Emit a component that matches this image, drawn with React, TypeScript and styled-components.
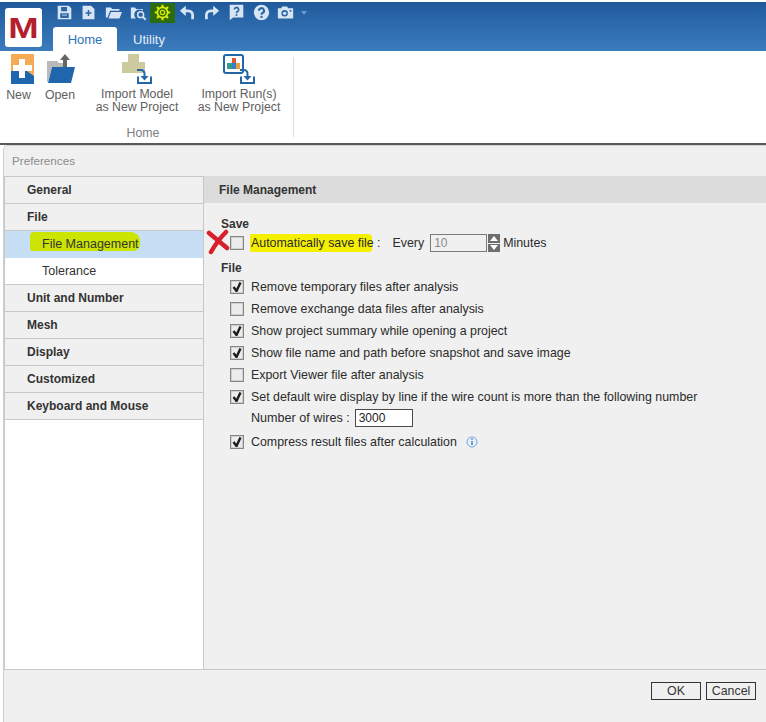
import React from 'react';
import styled, { createGlobalStyle } from 'styled-components';

const GlobalStyle = createGlobalStyle`
  html, body { margin: 0; padding: 0; background: #fff; }
  body { font-family: "Liberation Sans", Arial, sans-serif; font-size: 12.4px; color: #2b2b2b; }
`;

const Page = styled.div`
  width: 766px;
  height: 722px;
  overflow: hidden;
  display: flex;
  flex-direction: column;
`;

/* ---------- title bar ---------- */
const TopBar = styled.header`
  height: 49px;
  margin-top: 2px;
  background: linear-gradient(#1f5a9c, #3b7cbd);
  display: flex;
  padding-left: 5px;
  flex: none;
`;
const Logo = styled.div`
  width: 37px;
  height: 39px;
  margin-top: 6px;
  background: #fff;
  border-radius: 3px;
  display: flex;
  align-items: center;
  justify-content: center;
  color: #b3202c;
  font-size: 32px;
  font-weight: 700;
  line-height: 1;
`;
const LogoLetter = styled.span`
  display: inline-block;
  transform: scale(1.14, 0.95);
`;
const TopColumn = styled.div`
  margin-left: 11px;
  display: flex;
  flex-direction: column;
`;
const QuickBar = styled.div`
  height: 25px;
  display: flex;
  align-items: center;
  margin: -2px 0 0 -1px;
`;
const QuickIcon = styled.div<{ $active?: boolean; $w?: number }>`
  width: ${({ $w }) => $w ?? 24.6}px;
  height: 20px;
  flex: none;
  display: flex;
  align-items: center;
  justify-content: center;
  background: ${({ $active }) => ($active ? '#2c6b10' : 'transparent')};
`;
const Tabs = styled.div`
  display: flex;
  height: 24px;
  margin-top: 2px;
`;
const Tab = styled.div<{ $active?: boolean }>`
  width: 64px;
  display: flex;
  align-items: center;
  justify-content: center;
  font-size: 13px;
  border-radius: 3px 3px 0 0;
  background: ${({ $active }) => ($active ? '#fff' : 'transparent')};
  color: ${({ $active }) => ($active ? '#2f72b5' : '#e4eef8')};
`;

/* ---------- ribbon ---------- */
const Ribbon = styled.section`
  height: 92px;
  flex: none;
  background: #fff;
  display: flex;
`;
const RibbonGroup = styled.div`
  width: 293px;
  border-right: 1px solid #dcdcdc;
  margin: 6px 0 6px;
  display: flex;
  flex-direction: column;
`;
const RibbonButtons = styled.div`
  display: flex;
  flex: none;
  height: 71px;
  margin-top: -3px;
`;
const RibbonButton = styled.div<{ $w: number }>`
  width: ${({ $w }) => $w}px;
  flex: none;
  display: flex;
  flex-direction: column;
  align-items: center;
  color: #606060;
  font-size: 12.3px;
  line-height: 13px;
  text-align: center;
  white-space: nowrap;
`;
const RibbonIcon = styled.div<{ $h: number; $shift?: number }>`
  height: ${({ $h }) => $h}px;
  margin-left: ${({ $shift }) => $shift ?? 0}px;
  display: flex;
`;
const GroupLabel = styled.div`
  flex: none;
  margin-top: 1px;
  padding-right: 7px;
  text-align: center;
  color: #7d7d7d;
  font-size: 12.3px;
  line-height: 14px;
`;

/* ---------- dialog ---------- */
const Dialog = styled.section`
  flex: 1;
  min-height: 0;
  border-top: 2px solid #5a5a5a;
  background: #fff;
  display: flex;
  flex-direction: column;
`;
const DialogInner = styled.div`
  flex: 1;
  min-height: 0;
  margin-left: 3px;
  border-left: 1px solid #cfcfcf;
  border-top: 1px solid #cfcfcf;
  border-top-left-radius: 5px;
  background: #f0f0f0;
  display: flex;
  flex-direction: column;
`;
const DialogTitle = styled.div`
  height: 30px;
  box-sizing: border-box;
  flex: none;
  padding: 0 0 2px 8px;
  display: flex;
  align-items: center;
  color: #8c8c8c;
  font-size: 11.7px;
`;
const DialogBody = styled.div`
  height: 493px;
  flex: none;
  display: flex;
`;
const Sidebar = styled.nav`
  width: 200px;
  box-sizing: border-box;
  flex: none;
  background: #fff;
  border-top: 1px solid #c8c8c8;
  border-left: 1px solid #c8c8c8;
  border-right: 1px solid #c8c8c8;
`;
const Category = styled.div`
  height: 26px;
  padding-left: 22px;
  display: flex;
  align-items: center;
  background: #f0f0f0;
  border-bottom: 1px solid #c8c8c8;
  font-size: 12px;
  font-weight: 700;
  color: #333;
`;
const SubItem = styled.div<{ $selected?: boolean; $last?: boolean }>`
  height: ${({ $selected }) => ($selected ? 27 : 26)}px;
  box-sizing: border-box;
  padding: ${({ $selected }) => ($selected ? '0 0 1px 37px' : '0 0 0 37px')};
  display: flex;
  align-items: center;
  position: relative;
  font-size: 12.5px;
  background: ${({ $selected }) => ($selected ? '#c6dff5' : '#fff')};
  color: #333;
  ${({ $last }) => ($last ? 'height: 27px; border-bottom: 1px solid #c8c8c8;' : '')}
`;
const Marker = styled.span`
  position: absolute;
  left: 25px;
  top: 1px;
  width: 110px;
  height: 19px;
  background: #cbe400;
  border-radius: 4px 9px 7px 3px;
`;
const SubItemText = styled.span`
  position: relative;
`;

const Content = styled.main`
  flex: 1;
  min-width: 0;
  display: flex;
  flex-direction: column;
`;
const ContentHeader = styled.div`
  height: 27px;
  flex: none;
  padding-left: 15px;
  display: flex;
  align-items: center;
  background: #dcdcdc;
  font-size: 12px;
  font-weight: 700;
  color: #333;
`;
const ContentBody = styled.div`
  padding: 14px 0 0 17px;
  display: flex;
  flex-direction: column;
`;
const SectionLabel = styled.div<{ $top?: number }>`
  height: 15px;
  margin-top: ${({ $top }) => $top ?? 0}px;
  line-height: 14px;
  font-size: 12px;
  font-weight: 700;
  color: #333;
`;
const Row = styled.div<{ $indent?: number; $h?: number }>`
  height: ${({ $h }) => $h ?? 22}px;
  display: flex;
  align-items: center;
  padding-left: ${({ $indent }) => $indent ?? 9}px;
  position: relative;
  white-space: nowrap;
`;
const Box = styled.span`
  width: 14px;
  height: 14px;
  box-sizing: border-box;
  flex: none;
  margin-right: 7px;
  border: 1px solid #858585;
  background: #ececec;
  box-shadow: inset 0 0 0 1px #d0d0d0;
  display: flex;
  align-items: center;
  justify-content: center;
`;
const HighlightedLabel = styled.span`
  position: relative;
`;
const YellowMark = styled.span`
  position: absolute;
  left: -1px;
  top: -2px;
  width: 122px;
  height: 18px;
  background: #f5ef00;
  border-radius: 2px 4px 3px 2px;
`;
const HighlightedText = styled.span`
  position: relative;
`;
const Every = styled.span`
  margin-left: 12px;
`;
const Field = styled.span<{ $w: number; $disabled?: boolean }>`
  width: ${({ $w }) => $w}px;
  height: 18px;
  box-sizing: border-box;
  display: flex;
  align-items: center;
  padding-left: 3px;
  font-size: 12px;
  border: 1px solid ${({ $disabled }) => ($disabled ? '#7a7a7a' : '#4a4a4a')};
  background: ${({ $disabled }) => ($disabled ? '#f0f0f0' : '#fff')};
  color: ${({ $disabled }) => ($disabled ? '#8a8a8a' : '#222')};
`;
const EveryField = styled(Field)`
  margin-left: 6px;
`;
const WiresField = styled(Field)`
  margin-left: 5px;
`;
const WiresLabel = styled.span`
  font-size: 12.6px;
`;
const Spinner = styled.span`
  width: 12px;
  height: 18px;
  margin: 0 3px 0 1px;
  display: flex;
  flex-direction: column;
  gap: 1px;
`;
const SpinnerPart = styled.span<{ $up?: boolean }>`
  flex: 1;
  background: #6e6e6e;
  display: flex;
  align-items: center;
  justify-content: center;
  &::before {
    content: '';
    border-left: 4px solid transparent;
    border-right: 4px solid transparent;
    ${({ $up }) => ($up ? 'border-bottom: 5px solid #fff;' : 'border-top: 5px solid #fff;')}
  }
`;
const CrossMark = styled.svg`
  position: absolute;
  left: -15px;
  top: -3px;
`;
const InfoIcon = styled.svg`
  margin-left: 9px;
`;

const Footer = styled.footer`
  flex: 1;
  border-top: 1px solid #c8c8c8;
  display: flex;
  justify-content: flex-end;
  gap: 5px;
  padding: 12px 10px 0 0;
  align-items: flex-start;
`;
const FooterButton = styled.button`
  width: 50px;
  height: 18px;
  box-sizing: border-box;
  padding: 0;
  border: 1px solid #333;
  background: #f0f0f0;
  color: #333;
  font: 12.4px "Liberation Sans", Arial, sans-serif;
`;

/* ---------- drawings ---------- */
const Q = { w: 17, h: 17, vb: '0 0 20 20' };
const qc = '#d6e4f3';

const QuickIcons = () => (
  <QuickBar>
    <QuickIcon>
      <svg width={Q.w} height={Q.h} viewBox={Q.vb}><path fill={qc} d="M2 2h13l3 3v13H2z" /><path fill="#2a66a6" d="M6 3.500h7v5H6zM5 11h10v5.500H5z" /><path fill={qc} d="M7 12.500h6v1H7z" /></svg>
    </QuickIcon>
    <QuickIcon>
      <svg width={Q.w} height={Q.h} viewBox={Q.vb}><path fill={qc} d="M3 2h10l4 4v12H3z" /><path stroke="#2a66a6" strokeWidth="1.800" d="M10 7v7M6.500 10.500h7" /></svg>
    </QuickIcon>
    <QuickIcon>
      <svg width={Q.w} height={Q.h} viewBox={Q.vb}><path fill={qc} d="M1 4h6l1.500 2H17v2H6L3 16H1z" /><path fill={qc} d="M7 9.500h13l-3 7.500H4z" /></svg>
    </QuickIcon>
    <QuickIcon>
      <svg width={Q.w} height={Q.h} viewBox={Q.vb}><path fill={qc} d="M1 4h5l1 2h8v2a6 6 0 0 0-8 9H1z" /><circle cx="12.500" cy="12.500" r="3.500" fill="none" stroke={qc} strokeWidth="1.800" /><path stroke={qc} strokeWidth="2.200" d="M15 15l3.500 3.500" /></svg>
    </QuickIcon>
    <QuickIcon $active>
      <svg width={Q.w} height={Q.h} viewBox={Q.vb}>
        <circle cx="10" cy="10" r="6" fill="none" stroke="#e2ec00" strokeWidth="2" />
        <circle cx="10" cy="10" r="2.500" fill="none" stroke="#e2ec00" strokeWidth="1.500" />
        <path stroke="#e2ec00" strokeWidth="2.400" d="M10 1v3.500M10 15.500V19M1 10h3.500M15.500 10H19M3.500 3.500l2.500 2.500M14 14l2.500 2.500M16.500 3.500L14 6M6 14l-2.500 2.500" />
      </svg>
    </QuickIcon>
    <QuickIcon>
      <svg width={Q.w} height={Q.h} viewBox={Q.vb}><path fill="none" stroke={qc} strokeWidth="3.200" d="M5 8h6a5 5 0 0 1 5 5v5" /><path fill={qc} d="M8 2v12L1 8z" /></svg>
    </QuickIcon>
    <QuickIcon>
      <svg width={Q.w} height={Q.h} viewBox={Q.vb}><path fill="none" stroke={qc} strokeWidth="3.200" d="M15 8H9a5 5 0 0 0-5 5v5" /><path fill={qc} d="M12 2v12l7-6z" /></svg>
    </QuickIcon>
    <QuickIcon>
      <svg width={Q.w} height={Q.h} viewBox={Q.vb}><path fill={qc} d="M2 1h16v15H6l-4 3z" /><path fill="none" stroke="#2a66a6" strokeWidth="2" d="M7.500 6.500a2.500 2.500 0 1 1 3.700 2.300c-.9.500-1.200 1-1.200 2.200" /><path fill="#2a66a6" d="M9 12h2v2H9z" /></svg>
    </QuickIcon>
    <QuickIcon>
      <svg width={Q.w} height={Q.h} viewBox={Q.vb}><circle cx="10" cy="10" r="9" fill={qc} /><path fill="none" stroke="#2a66a6" strokeWidth="2.400" d="M7 8a3 3 0 1 1 4.200 2.600c-.9.500-1.200.9-1.200 2" /><path fill="#2a66a6" d="M8.800 14h2.400v2.400H8.800z" /></svg>
    </QuickIcon>
    <QuickIcon>
      <svg width={Q.w} height={Q.h} viewBox={Q.vb}><path fill={qc} d="M1 5h4l1-2h6l1 2h6v12H1z" /><circle cx="9" cy="11" r="3.800" fill="#2a66a6" /><circle cx="9" cy="11" r="2" fill={qc} /><path fill="#2a66a6" d="M15 7h2v2h-2z" /></svg>
    </QuickIcon>
    <QuickIcon $w={12}>
      <svg width="8" height="6" viewBox="0 0 8 6"><path fill="#6d9ccc" d="M1 1h6L4 5z" /></svg>
    </QuickIcon>
  </QuickBar>
);

const ImportArrow = ({ x, y }: { x: number; y: number }) => (
  <g transform={`translate(${x} ${y})`}>
    <path fill="none" stroke="#2467a8" strokeWidth="2" d="M1 7.500V14h13V7.500" />
    <path fill="none" stroke="#2467a8" strokeWidth="2" d="M0 1h4a3.500 3.500 0 0 1 3.500 3.500V8" />
    <path fill="#2467a8" d="M3.500 7h8l-4 4.500z" />
  </g>
);

const NewIcon = () => (
  <svg width="23" height="30" viewBox="0 0 23 30">
    <path fill="#f3ac55" d="M0 0h23v22l-6-4H0z" />
    <path fill="#1f66ad" d="M0 17h16l7 5v8H0z" />
    <path fill="#fff" d="M8 5h6v6h7v6h-7v7H8v-7H2v-6h6z" />
  </svg>
);
const OpenIcon = () => (
  <svg width="28" height="30" viewBox="0 0 28 30">
    <path fill="#b9b9b9" d="M0 7h10l2 2h8v4H5L1 28H0z" />
    <path fill="#666" d="M18 0l5 6h-3v7h-4V6h-3z" />
    <path fill="#1f66ad" d="M5 13h23l-4 16H1z" />
  </svg>
);
const ImportModelIcon = () => (
  <svg width="31" height="31" viewBox="0 0 31 31">
    <path fill="#cdcaa0" d="M6 0h11v8h6v11H0V8h6z" />
    <ImportArrow x={15} y={15} />
  </svg>
);
const ImportRunIcon = () => (
  <svg width="33" height="31" viewBox="0 0 33 31">
    <rect x="1" y="1" width="19" height="18" rx="2" fill="#fff" stroke="#2467a8" strokeWidth="2" />
    <path fill="#e0563c" d="M9 4h4v5H9z" />
    <path fill="#3a9a8a" d="M4 9h5v6H4z" />
    <path fill="#2e86c8" d="M9 9h4v6H9z" />
    <path fill="#e8a040" d="M13 9h4v6h-4z" />
    <ImportArrow x={17} y={15} />
  </svg>
);

const Check = () => (
  <svg width="10" height="10" viewBox="0 0 10 10"><path fill="none" stroke="#1c1c1c" strokeWidth="2.400" d="M1.500 5l3 4L8.500 .5" /></svg>
);

const CheckRow = ({ label, checked }: { label: string; checked?: boolean }) => (
  <Row>
    <Box>{checked && <Check />}</Box>
    {label}
  </Row>
);

const categoriesAfter = ['Unit and Number', 'Mesh', 'Display', 'Customized', 'Keyboard and Mouse'];

const App = () => (
  <Page>
    <GlobalStyle />
    <TopBar>
      <Logo><LogoLetter>M</LogoLetter></Logo>
      <TopColumn>
        <QuickIcons />
        <Tabs>
          <Tab $active>Home</Tab>
          <Tab>Utility</Tab>
        </Tabs>
      </TopColumn>
    </TopBar>
    <Ribbon>
      <RibbonGroup>
        <RibbonButtons>
          <RibbonButton $w={37}>
            <RibbonIcon $h={35} $shift={7}><NewIcon /></RibbonIcon>
            New
          </RibbonButton>
          <RibbonButton $w={46}>
            <RibbonIcon $h={35} $shift={2}><OpenIcon /></RibbonIcon>
            Open
          </RibbonButton>
          <RibbonButton $w={108}>
            <RibbonIcon $h={34}><ImportModelIcon /></RibbonIcon>
            Import Model<br />as New Project
          </RibbonButton>
          <RibbonButton $w={96}>
            <RibbonIcon $h={34}><ImportRunIcon /></RibbonIcon>
            Import Run(s)<br />as New Project
          </RibbonButton>
        </RibbonButtons>
        <GroupLabel>Home</GroupLabel>
      </RibbonGroup>
    </Ribbon>
    <Dialog>
      <DialogInner>
        <DialogTitle>Preferences</DialogTitle>
        <DialogBody>
          <Sidebar>
            <Category>General</Category>
            <Category>File</Category>
            <SubItem $selected>
              <Marker />
              <SubItemText>File Management</SubItemText>
            </SubItem>
            <SubItem $last>Tolerance</SubItem>
            {categoriesAfter.map((c) => (
              <Category key={c}>{c}</Category>
            ))}
          </Sidebar>
          <Content>
            <ContentHeader>File Management</ContentHeader>
            <ContentBody>
              <SectionLabel>Save</SectionLabel>
              <Row>
                <CrossMark width="24" height="26" viewBox="0 0 24 26">
                  <path fill="none" stroke="#d6202c" strokeWidth="4.500" strokeLinecap="round" d="M3 4c6 5 12 10 18 15M20 3C14 9 9 16 5 23" />
                </CrossMark>
                <Box />
                <HighlightedLabel>
                  <YellowMark />
                  <HighlightedText>Automatically save file :</HighlightedText>
                </HighlightedLabel>
                <Every>Every</Every>
                <EveryField $w={57} $disabled>10</EveryField>
                <Spinner>
                  <SpinnerPart $up />
                  <SpinnerPart />
                </Spinner>
                Minutes
              </Row>
              <SectionLabel $top={7}>File</SectionLabel>
              <CheckRow checked label="Remove temporary files after analysis" />
              <CheckRow label="Remove exchange data files after analysis" />
              <CheckRow checked label="Show project summary while opening a project" />
              <CheckRow checked label="Show file name and path before snapshot and save image" />
              <CheckRow label="Export Viewer file after analysis" />
              <CheckRow checked label="Set default wire display by line if the wire count is more than the following number" />
              <Row $indent={30} $h={20}>
                <WiresLabel>Number of wires :</WiresLabel>
                <WiresField $w={58}>3000</WiresField>
              </Row>
              <Row $h={27}>
                <Box><Check /></Box>
                Compress result files after calculation
                <InfoIcon width="12" height="12" viewBox="0 0 12 12">
                  <circle cx="6" cy="6" r="5" fill="#e8f0f8" stroke="#6fa5d8" />
                  <path stroke="#3f7fc0" strokeWidth="1.400" d="M6 5v4M6 2.500v1.400" />
                </InfoIcon>
              </Row>
            </ContentBody>
          </Content>
        </DialogBody>
        <Footer>
          <FooterButton>OK</FooterButton>
          <FooterButton>Cancel</FooterButton>
        </Footer>
      </DialogInner>
    </Dialog>
  </Page>
);

export default App;
